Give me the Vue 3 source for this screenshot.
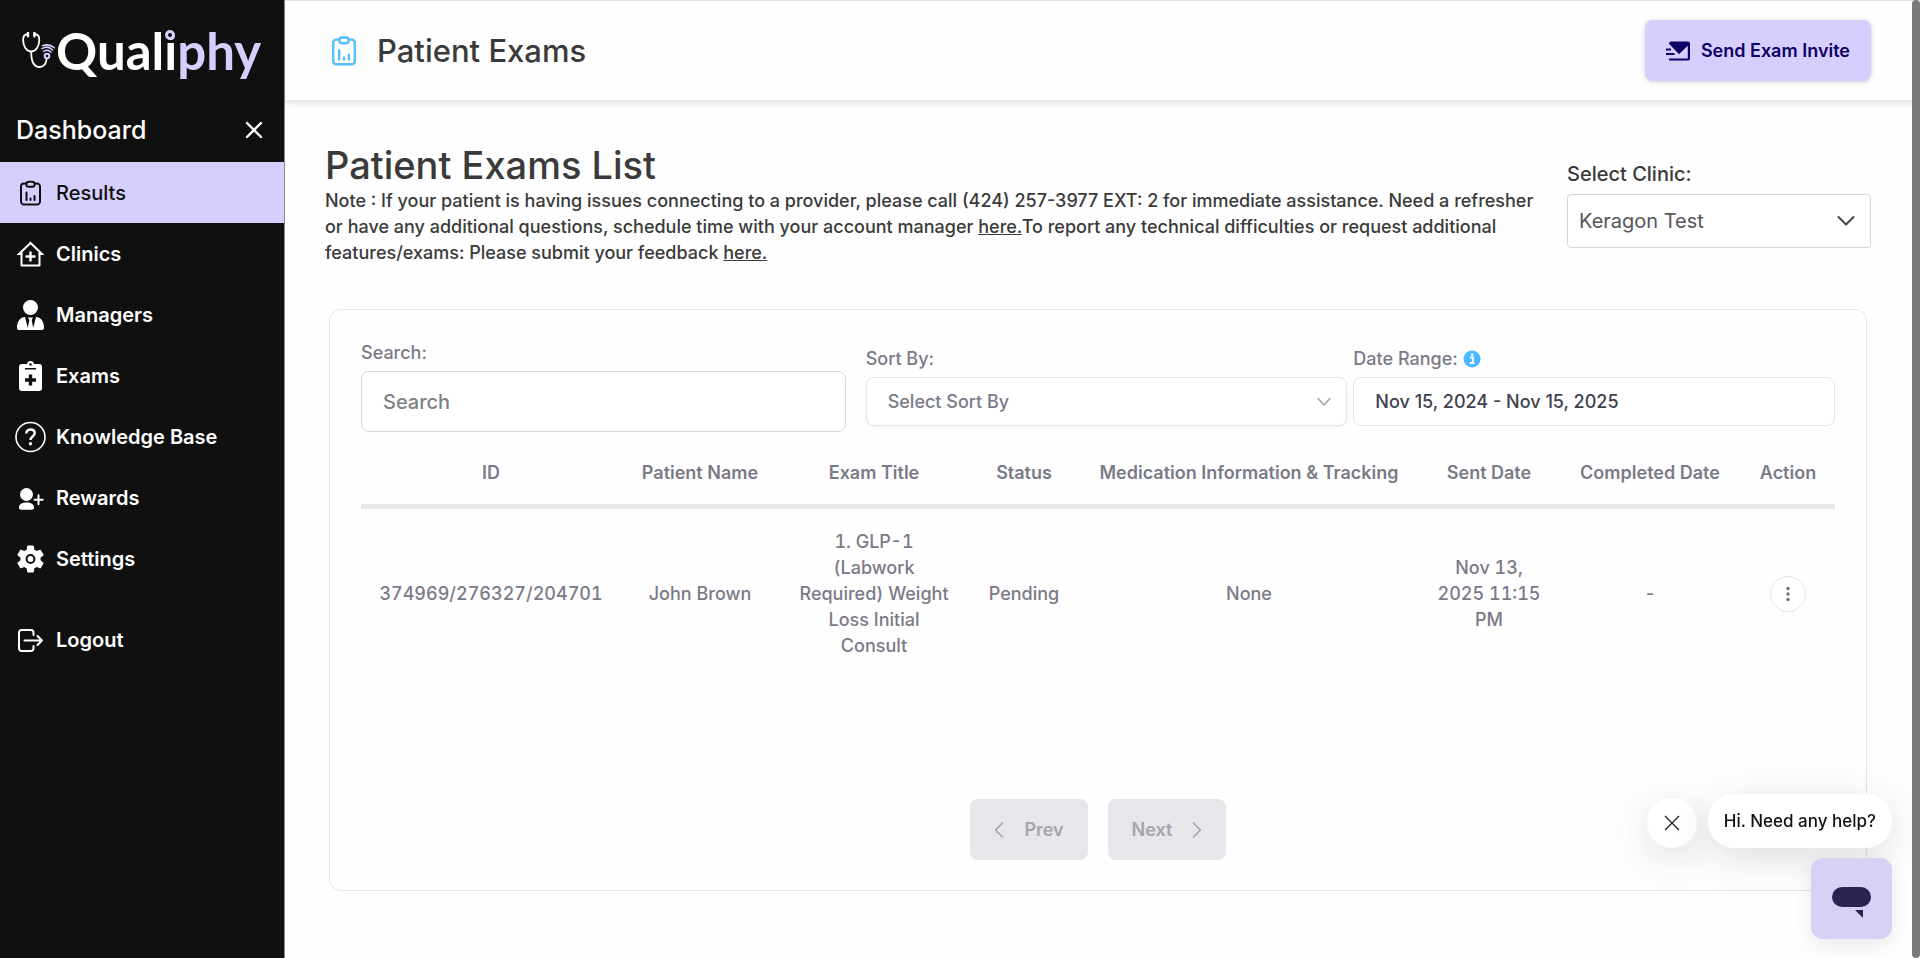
<script setup>
import { ref } from 'vue'

const gear =
  'M19.14 12.94c.04-.3.06-.61.06-.94 0-.32-.02-.64-.07-.94l2.03-1.58c.18-.14.23-.41.12-.61l-1.92-3.32c-.12-.22-.37-.29-.59-.22l-2.39.96c-.5-.38-1.03-.7-1.62-.94L14.4 2.81c-.04-.24-.24-.41-.48-.41h-3.84c-.24 0-.43.17-.47.41L9.25 5.35c-.59.24-1.13.57-1.62.94l-2.39-.96c-.22-.08-.47 0-.59.22L2.74 8.87c-.12.21-.08.47.12.61l2.03 1.58c-.05.3-.09.63-.09.94s.02.64.07.94l-2.03 1.58c-.18.14-.23.41-.12.61l1.92 3.32c.12.22.37.29.59.22l2.39-.96c.5.38 1.03.7 1.62.94l.36 2.54c.05.24.24.41.48.41h3.84c.24 0 .44-.17.47-.41l.36-2.54c.59-.24 1.13-.56 1.62-.94l2.39.96c.22.08.47 0 .59-.22l1.92-3.32c.12-.22.07-.47-.12-.61z'

const navItems = [
  { id: 'results', label: 'Results' },
  { id: 'clinics', label: 'Clinics' },
  { id: 'managers', label: 'Managers' },
  { id: 'exams', label: 'Exams' },
  { id: 'knowledge', label: 'Knowledge Base' },
  { id: 'rewards', label: 'Rewards' },
  { id: 'settings', label: 'Settings' },
  { id: 'logout', label: 'Logout' }
]
const active = ref('results')

const columns = [
  { id: 'id', label: 'ID' },
  { id: 'name', label: 'Patient Name' },
  { id: 'title', label: 'Exam Title' },
  { id: 'status', label: 'Status' },
  { id: 'medication', label: 'Medication Information & Tracking' },
  { id: 'sent', label: 'Sent Date' },
  { id: 'completed', label: 'Completed Date' }
]
const exams = [
  {
    id: '374969/276327/204701',
    name: 'John Brown',
    title: '1. GLP-1 (Labwork Required) Weight Loss Initial Consult',
    status: 'Pending',
    medication: 'None',
    sent: 'Nov 13, 2025 11:15 PM',
    completed: '-'
  }
]

const search = ref('')
const sortBy = ref('')
const clinic = ref('keragon')
const dateRange = ref('Nov 15, 2024 - Nov 15, 2025')
const helpOpen = ref(true)
</script>

<template>
  <div class="app">
    <aside class="sidebar">
      <a class="logo" href="#" aria-label="Qualiphy">
        <svg class="logo-mark" viewBox="0 0 34 38" fill="none" aria-hidden="true">
          <g stroke="#fff" stroke-width="1.8" stroke-linecap="round">
            <path d="M6 2.5H4C1.5 3 1 6 1.2 9c.3 6 3.6 10.500 8 10.500s7.700-4.500 8-10.500c.2-3-.3-6-2.800-6.500h-2" />
            <path d="M9.200 20c0 8 2 15 8.500 15 4.500 0 6.500-4 7-8.500" />
          </g>
          <path d="M6 .8v3.400M12.400.8v3.400" stroke="#fff" stroke-width="2.400" stroke-linecap="round" />
          <g stroke="#d6cffe" stroke-width="1.500" stroke-linecap="round">
            <circle cx="25" cy="24" r="2.300" stroke-width="2" />
            <path d="M21.500 19.500c2.500-1.700 5-1.700 7.500.8M20 16.700c4-2.500 7.500-2 10.500 1.300M20.500 13.800c4.500-1.800 8.500-.8 11.800 2" />
          </g>
        </svg>
        <span class="logo-text">Qual<span class="logo-i">i</span><span class="logo-accent">phy</span></span>
      </a>

      <div class="sidebar-head">
        <h2>Dashboard</h2>
        <button class="icon-button" type="button" aria-label="Close menu">
          <svg width="18" height="18" viewBox="0 0 18 18" fill="none" stroke="#fff" stroke-width="2.400" stroke-linecap="round"><path d="M2 2l14 14M16 2L2 16" /></svg>
        </button>
      </div>

      <nav class="nav">
        <a
          v-for="item in navItems"
          :key="item.id"
          href="#"
          class="nav-item"
          :class="[item.id, { active: active === item.id }]"
          @click.prevent="active = item.id"
        >
          <svg class="nav-icon" viewBox="0 0 30 30" fill="none" stroke="currentColor" stroke-width="2" stroke-linecap="round" stroke-linejoin="round" aria-hidden="true">
            <template v-if="item.id === 'results'">
              <path d="M11 5.500H9a3 3 0 0 0-3 3v15a3 3 0 0 0 3 3h13a3 3 0 0 0 3-3v-15a3 3 0 0 0-3-3h-2" />
              <rect x="11.300" y="3.700" width="8.400" height="5" rx="2.500" />
              <path d="M11.500 14.500v7.500M15.500 20.500V22M19.500 18v4" />
            </template>
            <template v-else-if="item.id === 'clinics'">
              <path d="M6.500 15H4L15.500 4 27 15h-2.500" stroke-linejoin="miter" />
              <path d="M6.500 14v12.500h18V14" />
              <path d="M15.500 13.500v8M11.500 17.500h8" stroke-width="2.400" />
            </template>
            <g v-else-if="item.id === 'managers'" fill="currentColor" stroke="none">
              <circle cx="15.500" cy="7.500" r="7.500" />
              <path d="M2 28c0-6 2.500-10.500 8-11l2.800 11 1.500-8-1.300-2.600h5l-1.300 2.600 1.500 8L21 17c5.500.5 8 5 8 11 0 1.300-.8 2-2 2H4c-1.200 0-2-.7-2-2z" />
            </g>
            <template v-else-if="item.id === 'exams'">
              <g stroke="none" fill="currentColor">
                <rect x="4" y="3" width="23" height="27" rx="3" />
                <circle cx="15.500" cy="3.500" r="3.500" />
              </g>
              <circle cx="15.500" cy="3.500" r="1.200" fill="#101010" stroke="none" />
              <path d="M10.500 7.800h10" stroke="#101010" stroke-width="1.500" />
              <path d="M15.500 13.500v11M10 19h11" stroke="#101010" stroke-width="3.400" stroke-linecap="butt" />
            </template>
            <template v-else-if="item.id === 'knowledge'">
              <circle cx="15.500" cy="15" r="14.500" stroke-width="1.600" />
              <path d="M11.300 11.500c0-2.800 2-4 4.200-4s4.200 1.300 4.200 3.800c0 3.300-4.200 3.200-4.200 6.700" stroke-width="2.400" stroke-linecap="butt" />
              <circle cx="15.500" cy="21.700" r="1.700" fill="currentColor" stroke="none" />
            </template>
            <template v-else-if="item.id === 'rewards'">
              <g fill="currentColor" stroke="none">
                <circle cx="11.500" cy="11.500" r="6.500" />
                <path d="M4 24.500c0-3.500 3-5 7.500-5s7.500 1.500 7.500 5c0 1.500-.8 2.200-2.200 2.200H6.200c-1.400 0-2.200-.7-2.200-2.200z" />
              </g>
              <path d="M23.500 12.300v9M19.500 16.800h8.200" />
            </template>
            <template v-else-if="item.id === 'settings'">
              <path :d="gear" transform="translate(-1.300 -1.800) scale(1.400)" fill="currentColor" stroke="none" />
              <circle cx="15.500" cy="15" r="3.900" stroke="#101010" />
            </template>
            <template v-else>
              <path d="M18.500 10V7.500a2.500 2.500 0 0 0-2.500-2.500H6.500A2.500 2.500 0 0 0 4 7.500v16A2.500 2.500 0 0 0 6.500 26H16a2.500 2.500 0 0 0 2.500-2.500V21" />
              <path d="M9.500 15.500H27M22.500 11l4.500 4.500-4.500 4.500" />
            </template>
          </svg>
          <span>{{ item.label }}</span>
        </a>
      </nav>
    </aside>

    <div class="page">
      <header class="topbar">
        <svg class="topbar-icon" viewBox="0 0 30 30" fill="none" stroke="#57bcfb" stroke-width="2" stroke-linecap="round" stroke-linejoin="round" aria-hidden="true">
          <path d="M11 5.500H8.500a2.500 2.500 0 0 0-2.500 2.500v15.500A2.500 2.500 0 0 0 8.500 26h13a2.500 2.500 0 0 0 2.500-2.500V8a2.500 2.500 0 0 0-2.500-2.500H19" />
          <rect x="11" y="3.700" width="8" height="4.800" rx="2.400" />
          <path d="M11 14.500V22M15 20.500V22M19 18v4" />
        </svg>
        <h1>Patient Exams</h1>
        <button class="invite" type="button">
          <svg width="24" height="20" viewBox="0 0 24 20" aria-hidden="true">
            <path d="M3 2.500C3 1.500 3.500.5 5 .5h17c1.500 0 2 .7 2 2v15c0 1.500-.7 2-2 2H3v-2h18.800V4.800L13 13z" fill="#0e0066" />
            <path d="M3 2.500L13 13l9-9.500" fill="#0e0066" />
            <path d="M0 8.500h5M0 13h8.500" stroke="#0e0066" stroke-width="1.800" />
          </svg>
          Send Exam Invite
        </button>
      </header>

      <main class="content">
        <section class="intro">
          <div class="intro-text">
            <h2>Patient Exams List</h2>
            <p>
              Note : If your patient is having issues connecting to a provider, please call (424) 257-3977 EXT: 2 for immediate assistance. Need a refresher or have any additional questions, schedule time with your account manager <a href="#">here.</a>To report any technical difficulties or request additional features/exams: Please submit your feedback <a href="#">here.</a>
            </p>
          </div>
          <div class="clinic">
            <label for="clinic">Select Clinic:</label>
            <div class="select-wrap">
              <select id="clinic" v-model="clinic">
                <option value="keragon">Keragon Test</option>
              </select>
              <svg class="chevron" width="18" height="11" viewBox="0 0 18 11" fill="none" stroke="#444" stroke-width="2" stroke-linecap="round" stroke-linejoin="round"><path d="M1.500 1.500L9 9l7.500-7.500" /></svg>
            </div>
          </div>
        </section>

        <section class="card">
          <div class="filters">
            <div class="field search">
              <label for="search">Search:</label>
              <input id="search" v-model="search" type="text" placeholder="Search" />
            </div>
            <div class="pair">
              <div class="field">
                <label for="sort">Sort By:</label>
                <div class="select-wrap">
                  <select id="sort" v-model="sortBy">
                    <option value="">Select Sort By</option>
                  </select>
                  <svg class="chevron" width="14" height="9" viewBox="0 0 14 9" fill="none" stroke="#a3a3ab" stroke-width="1.600" stroke-linecap="round" stroke-linejoin="round"><path d="M1 1l6 6.500L13 1" /></svg>
                </div>
              </div>
              <div class="field">
                <label for="range">
                  Date Range:
                  <svg width="18" height="18" viewBox="0 0 18 18" aria-hidden="true">
                    <circle cx="9" cy="9" r="8.500" fill="#4db8ff" />
                    <path d="M7 7.500h3v5M6.800 13h4.600" fill="none" stroke="#fff" stroke-width="1.800" />
                    <circle cx="9.200" cy="4.800" r="1.300" fill="#fff" />
                  </svg>
                </label>
                <input id="range" v-model="dateRange" type="text" />
              </div>
            </div>
          </div>

          <table>
            <colgroup>
              <col v-for="c in columns" :key="c.id" :class="'col-' + c.id" />
              <col class="col-action" />
            </colgroup>
            <thead>
              <tr>
                <th v-for="c in columns" :key="c.id" scope="col">{{ c.label }}</th>
                <th scope="col">Action</th>
              </tr>
            </thead>
            <tbody>
              <tr v-for="exam in exams" :key="exam.id">
                <td v-for="c in columns" :key="c.id">{{ exam[c.id] }}</td>
                <td>
                  <button class="more" type="button" aria-label="Row actions">
                    <svg width="4" height="16" viewBox="0 0 4 16" fill="#6e6e76"><circle cx="2" cy="2.500" r="1.700" /><circle cx="2" cy="8" r="1.700" /><circle cx="2" cy="13.500" r="1.700" /></svg>
                  </button>
                </td>
              </tr>
            </tbody>
          </table>

          <div class="pager">
            <button type="button" disabled>
              <svg width="10" height="16" viewBox="0 0 10 16" fill="none" stroke="currentColor" stroke-width="1.600" stroke-linecap="round" stroke-linejoin="round"><path d="M8.500 1L1.500 8l7 7" /></svg>
              Prev
            </button>
            <button type="button" disabled>
              Next
              <svg width="10" height="16" viewBox="0 0 10 16" fill="none" stroke="currentColor" stroke-width="1.600" stroke-linecap="round" stroke-linejoin="round"><path d="M1.500 1l7 7-7 7" /></svg>
            </button>
          </div>
        </section>
      </main>
    </div>

    <div class="scrollbar" aria-hidden="true"></div>

    <div class="chat">
      <div v-if="helpOpen" class="chat-row">
        <button class="chat-close" type="button" aria-label="Dismiss" @click="helpOpen = false">
          <svg width="16" height="16" viewBox="0 0 16 16" fill="none" stroke="#222" stroke-width="1.300"><path d="M1 1l14 14M15 1L1 15" /></svg>
        </button>
        <div class="chat-bubble">Hi. Need any help?</div>
      </div>
      <button class="launcher" type="button" aria-label="Open chat">
        <svg width="39" height="32" viewBox="0 0 39 32" fill="#2b2350"><rect width="39" height="20" rx="10" /><path d="M23 23h8v8z" /></svg>
      </button>
    </div>
  </div>
</template>

<style>
body {
  margin: 0;
  background: #fefefe;
}
</style>

<style scoped>
.app,
.app * {
  box-sizing: border-box;
}
.app {
  display: flex;
  min-height: 100vh;
  font-family: Inter, "Liberation Sans", sans-serif;
  color: #3a3a3a;
}
button,
input,
select {
  font: inherit;
  color: inherit;
}
button {
  cursor: pointer;
}
h1,
h2,
p {
  margin: 0;
}

.sidebar {
  flex: 0 0 285px;
  background: #101010;
  border-right: 1px solid #8a8a8a;
  color: #fff;
}
.logo {
  display: flex;
  align-items: center;
  height: 97px;
  padding: 4px 0 0 22px;
  color: #fff;
  text-decoration: none;
}
.logo-mark {
  width: 34px;
  height: 38px;
}
.logo-text {
  font: 700 51px/60px Lato, "Open Sans", sans-serif;
}
.logo-i {
  position: relative;
}
.logo-i::after {
  content: "";
  position: absolute;
  top: 10px;
  left: 1px;
  width: 10px;
  height: 10px;
  box-sizing: border-box;
  border: 3px solid #d6cffe;
  border-radius: 50%;
  background: #101010;
}
.logo-accent {
  color: #d6cffe;
}
.sidebar-head {
  display: flex;
  align-items: center;
  justify-content: space-between;
  height: 65px;
  padding: 0 16px;
}
.sidebar-head h2 {
  font-size: 25px;
  font-weight: 500;
}
.icon-button {
  display: grid;
  place-items: center;
  width: 28px;
  height: 28px;
  padding: 0;
  border: 0;
  background: none;
}
.nav-item {
  display: flex;
  align-items: center;
  gap: 11px;
  height: 61px;
  padding-left: 15px;
  color: #fff;
  font-size: 20px;
  font-weight: 600;
  text-decoration: none;
}
.nav-item.active {
  background: #d6cffe;
  color: #101010;
  font-weight: 500;
}
.nav-item.logout {
  margin-top: 20px;
}
.nav-icon {
  width: 30px;
  height: 30px;
  overflow: visible;
}

.page {
  flex: 1;
  min-width: 0;
}
.topbar {
  display: flex;
  align-items: center;
  height: 100px;
  padding: 0 49px 0 41px;
  border-top: 1px solid #e2e2e2;
  background: #fefefe;
  box-shadow: 0 2px 8px rgba(0, 0, 0, 0.16);
}
.topbar-icon {
  width: 36px;
  height: 36px;
}
.topbar h1 {
  flex: 1;
  margin-left: 15px;
  font-size: 31px;
  font-weight: 500;
}
.invite {
  display: flex;
  align-items: center;
  gap: 11px;
  height: 61px;
  padding: 0 21px;
  border: 0;
  border-radius: 8px;
  background: #d6cffe;
  box-shadow: 0 1px 5px rgba(0, 0, 0, 0.2);
  color: #0e0066;
  font-size: 18px;
  font-weight: 600;
}

.content {
  padding: 43px 49px 68px 40px;
}
.intro {
  display: flex;
  justify-content: space-between;
  gap: 20px;
}
.intro-text {
  flex: 1;
  max-width: 1216px;
}
.intro h2 {
  font-size: 38px;
  font-weight: 500;
  line-height: 45px;
}
.intro p {
  font-size: 18px;
  font-weight: 500;
  line-height: 26px;
}
.intro a {
  color: inherit;
}
.clinic {
  width: 304px;
  padding-top: 16px;
}
.clinic label {
  display: block;
  margin-bottom: 5px;
  font-size: 20px;
  font-weight: 500;
  line-height: 30px;
}
.select-wrap {
  position: relative;
}
select {
  width: 100%;
  appearance: none;
  background: #fff;
}
.chevron {
  position: absolute;
  top: 50%;
  right: 16px;
  transform: translateY(-50%);
  pointer-events: none;
}
.clinic select {
  height: 54px;
  padding: 0 11px;
  border: 1px solid #d5d5d5;
  border-radius: 4px;
  color: #555559;
  font-size: 20px;
}

.card {
  margin: 43px 4px 0;
  padding: 30px 31px;
  border: 1px solid #e6e6ea;
  border-radius: 12px;
  color: #7b7a88;
}
.filters {
  display: flex;
  align-items: center;
  gap: 20px;
}
.pair {
  display: flex;
  flex: 2;
  gap: 6px;
}
.field {
  flex: 1;
  min-width: 0;
}
.field label {
  display: flex;
  align-items: center;
  gap: 5px;
  margin-bottom: 5px;
  font-size: 18px;
  font-weight: 500;
  line-height: 26px;
}
.field input,
.field select {
  display: block;
  width: 100%;
  height: 49px;
  padding: 0 21px;
  border: 1px solid #e6e6ea;
  border-radius: 8px;
  background: #fff;
  font-size: 18px;
  font-weight: 500;
}
.field select {
  box-shadow: 0 1px 3px rgba(0, 0, 0, 0.06);
}
.field #range {
  color: #3f4150;
}
.field.search input {
  height: 61px;
  border-color: #d8d8dc;
  font-size: 20px;
}
.search input::placeholder {
  color: #7f8084;
  opacity: 1;
}

table {
  width: 100%;
  table-layout: fixed;
  border-collapse: collapse;
  font-size: 18px;
  line-height: 26px;
  text-align: center;
}
.col-id { width: 260px; }
.col-name { width: 158px; }
.col-title { width: 190px; }
.col-status { width: 110px; }
.col-medication { width: 340px; }
.col-sent { width: 140px; }
.col-completed { width: 182px; }
.col-action { width: 94px; }
th {
  padding: 28px 4px 18px;
  border-bottom: 5px solid #e8e8ea;
  font-weight: 600;
}
td {
  padding: 20px 18px;
  font-weight: 500;
  font-variant-numeric: tabular-nums;
}
.more {
  display: inline-grid;
  place-items: center;
  width: 36px;
  height: 36px;
  padding: 0;
  border: 1px solid #e4e4e8;
  border-radius: 50%;
  background: #fff;
  vertical-align: middle;
}
.pager {
  display: flex;
  justify-content: center;
  gap: 20px;
  margin-top: 120px;
}
.pager button {
  display: flex;
  align-items: center;
  justify-content: center;
  gap: 20px;
  width: 118px;
  height: 61px;
  padding: 0;
  border: 0;
  border-radius: 8px;
  background: #e6e6eb;
  color: #a5a5ae;
  font-size: 18px;
  font-weight: 600;
}

.scrollbar {
  position: fixed;
  top: 0;
  right: 0;
  bottom: 0;
  width: 8px;
  border-radius: 4px;
  background: #7b797b;
}
.chat {
  position: fixed;
  right: 28px;
  bottom: 19px;
  display: flex;
  flex-direction: column;
  align-items: flex-end;
  gap: 10px;
}
.chat-row {
  display: flex;
  align-items: flex-end;
  gap: 11px;
}
.chat-close {
  display: grid;
  place-items: center;
  width: 50px;
  height: 50px;
  padding: 0;
  border: 0;
  border-radius: 50%;
  background: #fff;
  box-shadow: 0 10px 40px rgba(20, 50, 40, 0.15);
}
.chat-bubble {
  padding: 0 16px;
  border-radius: 26px;
  background: #fff;
  box-shadow: 0 10px 40px rgba(20, 50, 40, 0.15);
  color: #111;
  font-size: 17px;
  font-weight: 500;
  line-height: 54px;
  white-space: nowrap;
}
.launcher {
  display: grid;
  place-items: center;
  width: 81px;
  height: 81px;
  padding: 8px 0 0;
  border: 0;
  border-radius: 12px;
  background: #d8d1f5;
  box-shadow: 0 6px 20px rgba(20, 50, 40, 0.1);
}
</style>
